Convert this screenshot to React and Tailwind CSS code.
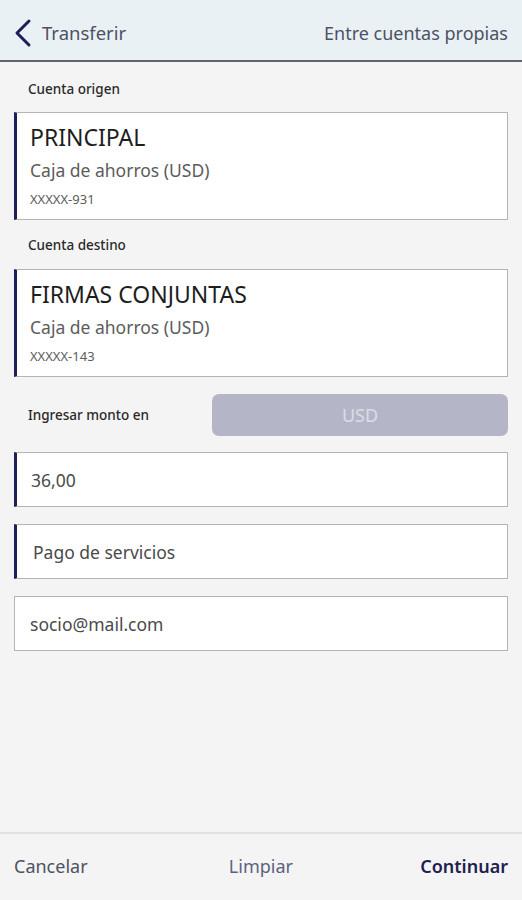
import { useState } from "react";

function AccountCard({ name, type, number }) {
  return (
    <div className="mx-[14px] h-[108px] bg-white border border-[#b4b4b4] border-l-[3px] border-l-[#1c1f5a] pl-[13px] pt-[9px]">
      <div className="text-[23px] leading-[30px] text-[#1e1e1e]">{name}</div>
      <div className="mt-[6px] text-[17.5px] leading-[24px] text-[#5c5c5c]">{type}</div>
      <div className="mt-[9px] text-[13px] leading-[16px] text-[#5c5c5c]">{number}</div>
    </div>
  );
}

function Field({ value, marked, indent }) {
  return (
    <div
      className={`mx-[14px] h-[55px] bg-white border border-[#b4b4b4] flex items-center ${
        marked ? "border-l-[3px] border-l-[#1c1f5a]" : ""
      } ${indent}`}
    >
      <span className="text-[17.5px] leading-[24px] text-[#4a4a4a]">{value}</span>
    </div>
  );
}

function Label({ children, className = "" }) {
  return <div className={`text-[13.5px] font-medium text-[#2a2a2a] leading-[18px] ${className}`}>{children}</div>;
}

export default function App() {
  const [amount] = useState("36,00");

  return (
    <div className="w-[522px] h-[900px] bg-[#f4f4f4] flex flex-col" style={{ fontFamily: "'Noto Sans', Roboto, sans-serif" }}>
      {/* Header */}
      <div className="h-[62px] bg-[#e9f1f5] border-b-2 border-[#5f6472] flex items-center justify-between pt-[6px] pl-[12px] pr-[14px]">
        <div className="flex items-center">
          <svg width="22" height="30" viewBox="0 0 22 30" fill="none">
            <path d="M17 3 L5 15 L17 27" stroke="#1c1f5a" strokeWidth="3" strokeLinecap="round" strokeLinejoin="round" />
          </svg>
          <span className="ml-[8px] text-[18.5px] leading-[24px] text-[#4d5263]">Transferir</span>
        </div>
        <span className="text-[18px] leading-[24px] text-[#4d5263]">Entre cuentas propias</span>
      </div>

      {/* Body */}
      <div className="flex-1 flex flex-col">
        <Label className="pl-[28px] pt-[18px] pb-[14px]">Cuenta origen</Label>
        <AccountCard name="PRINCIPAL" type="Caja de ahorros (USD)" number="XXXXX-931" />

        <Label className="pl-[28px] pt-[16px] pb-[15px]">Cuenta destino</Label>
        <AccountCard name="FIRMAS CONJUNTAS" type="Caja de ahorros (USD)" number="XXXXX-143" />

        <div className="mt-[17px] flex items-center pl-[28px] pr-[14px]">
          <Label className="w-[184px]">Ingresar monto en</Label>
          <button className="flex-1 h-[42px] rounded-[7px] bg-[#b4b6c8] text-[18px] text-[#dcdde6]">USD</button>
        </div>

        <div className="mt-[16px] flex flex-col gap-[17px]">
          <Field value={amount} marked indent="pl-[14px]" />
          <Field value="Pago de servicios" marked indent="pl-[16px]" />
          <Field value="socio@mail.com" indent="pl-[15px]" />
        </div>
      </div>

      {/* Footer */}
      <div className="h-[68px] border-t-2 border-[#e2e2e2] flex items-center justify-between px-[14px] pb-[1px]">
        <button className="text-[18px] text-[#4d5263]">Cancelar</button>
        <button className="text-[18px] text-[#5d6180] ml-[14px]">Limpiar</button>
        <button className="text-[18px] font-semibold text-[#1e2050]">Continuar</button>
      </div>
    </div>
  );
}
